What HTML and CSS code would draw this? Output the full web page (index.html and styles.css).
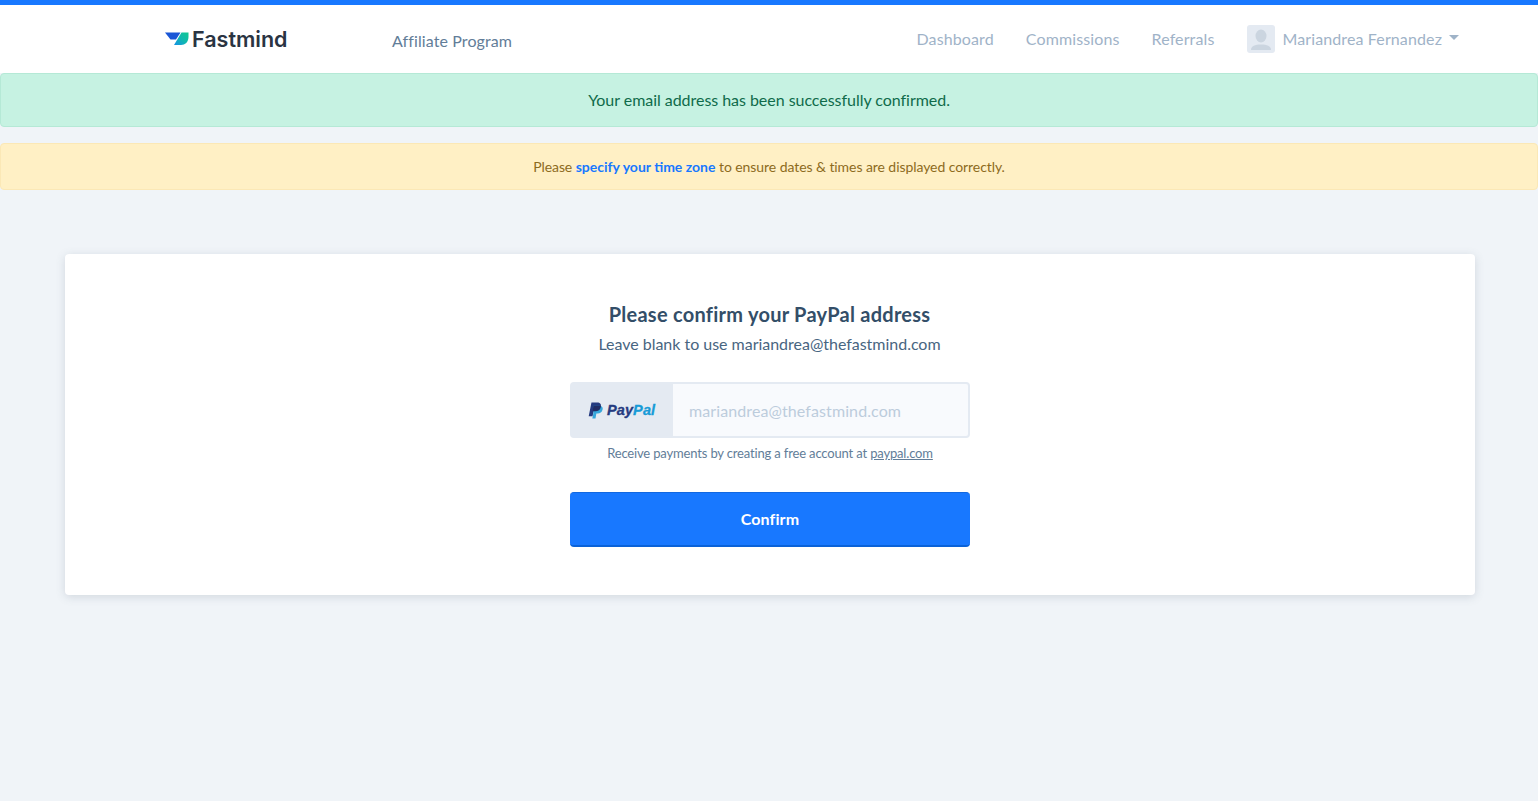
FILE: index.html
```html
<!DOCTYPE html>
<html lang="en">
<head>
<meta charset="utf-8">
<title>Fastmind Affiliate Program</title>
<link rel="stylesheet" href="styles.css">
</head>
<body>
<header class="topbar">
  <div class="brand">
    <a class="logo" href="#">
      <svg class="logo-mark" viewBox="0 0 24 14" width="24" height="14" aria-hidden="true">
        <defs>
          <linearGradient id="leaf" x1="0" y1="1" x2="1" y2="0">
            <stop offset="0" stop-color="#1590e8"/>
            <stop offset="0.5" stop-color="#10b8b0"/>
            <stop offset="1" stop-color="#10c890"/>
          </linearGradient>
        </defs>
        <path d="M0 0.5H15.5L11 7.5H5.5Z" fill="#1a56d6"/>
        <path d="M16.5 0.5H23.5V5C23.5 10 20 13 16 13H9Z" fill="url(#leaf)"/>
      </svg>
      <span class="logo-text">Fastmind</span>
    </a>
    <span class="program">Affiliate Program</span>
  </div>
  <nav class="nav">
    <a href="#">Dashboard</a>
    <a href="#">Commissions</a>
    <a href="#">Referrals</a>
    <a href="#" class="user">
      <span class="avatar">
        <svg viewBox="0 0 28 28" width="28" height="28" aria-hidden="true">
          <ellipse cx="14" cy="11" rx="5.5" ry="6.5" fill="#cbd5e0"/>
          <path d="M4 25C4 21 8 19.5 14 19.5C20 19.5 24 21 24 25Z" fill="#cbd5e0"/>
        </svg>
      </span>
      <span>Mariandrea Fernandez</span>
      <span class="caret"></span>
    </a>
  </nav>
</header>
<div class="alert alert-success">Your email address has been successfully confirmed.</div>
<div class="alert alert-warning">Please <a href="#">specify your time zone</a> to ensure dates &amp; times are displayed correctly.</div>
<main class="content">
  <section class="card">
    <h1>Please confirm your PayPal address</h1>
    <p class="lead">Leave blank to use mariandrea@thefastmind.com</p>
    <form class="form">
      <div class="input-group">
        <span class="addon">
          <svg viewBox="0 0 14 16" width="15" height="17" aria-hidden="true">
            <path d="M3.2 0.5H8.5C11.5 0.5 12.6 2.2 12 4.6C11.3 7.4 9.5 8.6 6.8 8.6H5.2L4.2 13.5H0.6Z" fill="#253b80"/>
            <path d="M5 3.5H10.8C13.4 3.8 14.2 5.3 13.6 7.4C13 9.8 11.3 10.9 9 10.9H7.8L7 15.5H4L5 10.5Z" fill="#179bd7" opacity=".85"/>
            <path d="M5.2 8.6H6.8C9.5 8.6 11.3 7.4 12 4.6L12.2 3.8C11.8 3.6 11.3 3.5 10.8 3.5H5L4.4 8.6Z" fill="#222d65"/>
          </svg>
          <span class="paypal"><span class="pay">Pay</span><span class="pal">Pal</span></span>
        </span>
        <input class="input" type="text" placeholder="mariandrea@thefastmind.com">
      </div>
      <p class="hint">Receive payments by creating a free account at <a href="#">paypal.com</a></p>
      <button class="btn" type="button">Confirm</button>
    </form>
  </section>
</main>
</body>
</html>
```
FILE: styles.css
```css
* { box-sizing: border-box; }
html, body { height: 100%; }
body {
  margin: 0;
  height: 801px;
  overflow: hidden;
  background: #f0f4f8;
  font-family: "Lato", "Liberation Sans", sans-serif;
  font-size: 16px;
  color: #334e68;
}
a { text-decoration: none; color: inherit; }
.topbar {
  height: 73px;
  background: #fff;
  border-top: 5px solid #1878ff;
  display: flex;
  align-items: center;
  justify-content: space-between;
  padding: 0 79px 0 165px;
}
.brand { display: flex; align-items: center; }
.logo { display: flex; align-items: center; gap: 3px; width: 227px; margin-top: -1px; }
.logo-text {
  font-family: "Inter", "Liberation Sans", sans-serif;
  font-size: 21.5px;
  font-weight: 600;
  color: #2a3442;
}
.program { font-size: 16px; letter-spacing: 0.1px; color: #627d98; margin-top: 2px; }
.nav {
  display: flex;
  align-items: center;
  gap: 32px;
  color: #9fb3c8;
  font-size: 16px;
  letter-spacing: 0.12px;
  margin-top: -1px;
}
.user { display: flex; align-items: center; gap: 8px; }
.avatar {
  width: 28px;
  height: 28px;
  margin: 0 -1px 0 1px;
  border-radius: 3px;
  background: #e4eaf2;
  overflow: hidden;
  display: block;
}
.avatar svg { display: block; }
.caret {
  width: 0;
  height: 0;
  margin: 0 0 3px -1px;
  border-left: 5px solid transparent;
  border-right: 5px solid transparent;
  border-top: 5px solid #9fb3c8;
}
.alert {
  border-radius: 4px;
  border: 1px solid transparent;
  text-align: center;
}
.alert-success {
  height: 54px;
  line-height: 52px;
  background: #c6f2e2;
  border-color: #b5e9d6;
  color: #0f6b4a;
  font-size: 16px;
  letter-spacing: -0.04px;
}
.alert-warning {
  height: 47px;
  line-height: 45px;
  margin-top: 16px;
  background: #fff0c5;
  border-color: #fbe8b6;
  color: #8d6b1d;
  font-size: 14px;
  letter-spacing: -0.07px;
}
.alert-warning a { color: #1878ff; font-weight: 700; letter-spacing: 0; }
.content { padding: 64px 63px 0 65px; }
.card {
  height: 341px;
  background: #fff;
  border-radius: 4px;
  box-shadow: 0 2px 10px rgba(70, 90, 110, 0.18);
  padding-top: 46px;
  display: flex;
  flex-direction: column;
  align-items: center;
}
h1 {
  margin: 0;
  padding-right: 1px;
  font-size: 20px;
  letter-spacing: 0.26px;
  line-height: 28px;
  font-weight: 700;
  color: #334e68;
}
.lead {
  margin: 4px 0 0;
  padding-right: 1px;
  font-size: 16px;
  letter-spacing: -0.02px;
  line-height: 24px;
  color: #486581;
}
.form { width: 400px; margin-top: 26px; }
.input-group {
  display: flex;
  height: 56px;
  border: 2px solid #e4eaf2;
  border-radius: 4px;
  background: #f8fafd;
}
.addon {
  width: 101px;
  background: #e4eaf2;
  display: flex;
  align-items: center;
  gap: 4px;
  padding-left: 16px;
}
.paypal {
  font-family: "Liberation Sans", sans-serif;
  font-size: 14.5px;
  font-weight: 700;
  font-style: italic;
  letter-spacing: 0.1px;
  -webkit-text-stroke: 0.3px currentColor;
}
.pay { color: #253b80; }
.pal { color: #179bd7; }
.input {
  flex: 1;
  min-width: 0;
  border: 0;
  background: transparent;
  padding: 0 16px;
  font: inherit;
  letter-spacing: 0.1px;
  outline: 0;
}
.input::placeholder { color: #bcccdc; opacity: 1; }
.hint {
  margin: 5px 0 0;
  text-align: center;
  font-size: 13px;
  letter-spacing: -0.16px;
  line-height: 20px;
  color: #627d98;
}
.hint a { text-decoration: underline; }
.btn {
  display: block;
  width: 100%;
  height: 55px;
  margin-top: 29px;
  padding: 0 0 2px;
  border: 0;
  border-top: 1px solid #1268e0;
  border-bottom: 2px solid #0a62d8;
  border-radius: 4px;
  background: #1878ff;
  color: #fff;
  font-family: inherit;
  font-size: 16px;
  letter-spacing: 0.1px;
  font-weight: 700;
}
```
